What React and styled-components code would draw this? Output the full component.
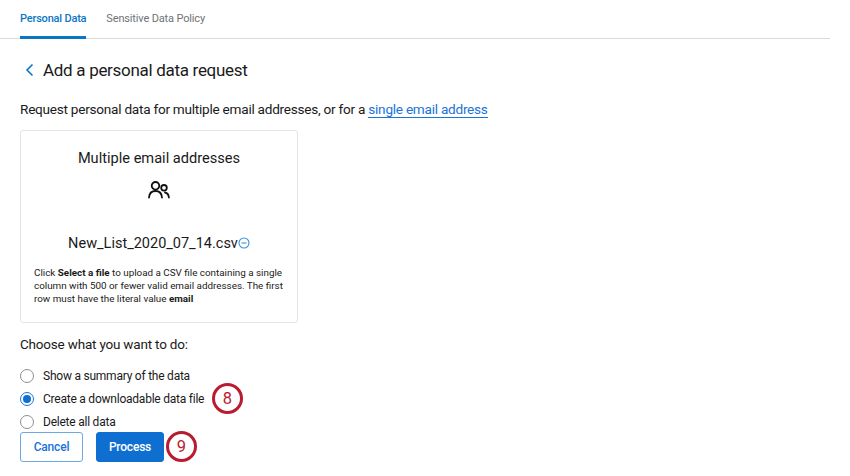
import React from "react";
import styled, { createGlobalStyle } from "styled-components";

const Global = createGlobalStyle`
  html, body { margin: 0; padding: 0; background: #fff; }
  body { font-family: Roboto, "Liberation Sans", sans-serif; color: #1a1a1a; }
`;
const Page = styled.div`
  width: 850px; height: 476px; overflow: hidden; position: relative;
`;
const Tabs = styled.div`
  width: 830px; height: 39px; box-sizing: border-box; padding-left: 20px;
  display: flex; gap: 20px; border-bottom: 1px solid #d9d9dc;
`;
const Tab = styled.div`
  height: 39px; box-sizing: border-box; padding-top: 12px; font-size: 11px; line-height: 14px;
  font-weight: ${p => (p.$active ? 500 : 400)};
  letter-spacing: ${p => (p.$active ? "-0.2px" : "-0.15px")};
  color: ${p => (p.$active ? "#0b76c4" : "#6f7378")};
  border-bottom: ${p => (p.$active ? "3px solid #0b76c4" : "0")};
`;
const Content = styled.div`
  padding: 0 20px; display: flex; flex-direction: column; align-items: flex-start;
`;
const Heading = styled.div`
  margin-top: 20px; height: 22px; display: flex; align-items: center; gap: 8px; padding-left: 5px;
`;
const Title = styled.h1`
  margin: 0; font-size: 17px; line-height: 22px; font-weight: 400; letter-spacing: -0.3px; color: #1a1a1a;
`;
const Lead = styled.p`
  margin: 18px 0 0; font-size: 13.6px; line-height: 20px; letter-spacing: -0.25px;
`;
const Link = styled.a`
  color: #1a73d9; border-bottom: 1px solid #1a73d9; padding-bottom: 0;
`;
const Card = styled.div`
  margin-top: 11px; width: 278px; height: 193px; box-sizing: border-box;
  border: 1px solid #e4e5e7; border-radius: 3px; padding: 17px 13px 0;
  display: flex; flex-direction: column; align-items: center;
`;
const CardTitle = styled.div`
  font-size: 14.6px; line-height: 20px; text-align: center;
`;
const IconWrap = styled.div`
  margin-top: 13px; height: 22px;
`;
const FileRow = styled.div`
  margin-top: 29px; height: 22px; display: flex; align-items: center; font-size: 14.5px;
`;
const Help = styled.p`
  margin: 12px 0 0; align-self: stretch; font-size: 9.85px; line-height: 13px;
  b { font-weight: 700; }
`;
const Prompt = styled.div`
  margin-top: 12px; font-size: 13.5px; line-height: 18px; letter-spacing: -0.2px;
`;
const Options = styled.div`
  margin-top: 16px; display: flex; flex-direction: column; gap: 9px;
`;
const Option = styled.label`
  display: flex; align-items: center; gap: 9px; height: 14px; font-size: 12px; line-height: 14px; letter-spacing: -0.23px;
`;
const Radio = styled.span`
  width: 14px; height: 14px; border-radius: 50%; box-sizing: border-box;
  border: 1px solid ${p => (p.$on ? "#1a73d9" : "#8b8e92")}; background: #fff;
  display: flex; align-items: center; justify-content: center;
  &::after { content: ""; width: 8px; height: 8px; border-radius: 50%; background: ${p => (p.$on ? "#0f6fd1" : "transparent")}; }
`;
const Actions = styled.div`
  margin-top: 3px; display: flex; gap: 13px;
`;
const Button = styled.button`
  width: ${p => (p.$primary ? "68px" : "63px")}; height: 30px; border-radius: 3px; box-sizing: border-box;
  font: 500 12px Roboto, sans-serif; letter-spacing: -0.2px; padding: 0;
  border: 1px solid ${p => (p.$primary ? "#0f6fd1" : "#6aa8e8")};
  background: ${p => (p.$primary ? "#0f6fd1" : "#fff")};
  color: ${p => (p.$primary ? "#fff" : "#1a73d9")};
`;
const Badge = styled.div`
  position: absolute; left: ${p => p.$x}px; top: ${p => p.$y}px;
  width: 31px; height: 31px; box-sizing: border-box; border-radius: 50%;
  border: 3px solid #b91c30; background: #fff; color: #b91c30;
  display: flex; align-items: center; justify-content: center;
  font: 400 16.5px Roboto, sans-serif;
`;

const Back = () => (
  <svg width="10" height="14" viewBox="0 0 10 14" fill="none" stroke="#0b76c4" strokeWidth="1.6">
    <path d="M7.500 1.500 2 7l5.500 5.500" />
  </svg>
);
const Users = () => (
  <svg width="22" height="18" viewBox="0 0 22 18" fill="none" stroke="#111" strokeWidth="1.8" strokeLinecap="round">
    <circle cx="7.500" cy="4.800" r="3.800" />
    <path d="M1 16.500c.3-4.200 3-6.500 6.500-6.500s6.200 2.300 6.500 6.500" />
    <circle cx="16" cy="6.800" r="2.800" />
    <path d="M17 11.500c2.200.4 3.600 2.300 3.900 5" />
  </svg>
);
const Minus = () => (
  <svg width="12" height="12" viewBox="0 0 12 12" fill="none" stroke="#3a8fd8" strokeWidth="1.100">
    <circle cx="6" cy="6" r="5" />
    <path d="M3.500 6h5" />
  </svg>
);

export default function App() {
  return (
    <Page>
      <Global />
      <Tabs>
        <Tab $active>Personal Data</Tab>
        <Tab>Sensitive Data Policy</Tab>
      </Tabs>
      <Content>
        <Heading><Back /><Title>Add a personal data request</Title></Heading>
        <Lead>Request personal data for multiple email addresses, or for a <Link>single email address</Link></Lead>
        <Card>
          <CardTitle>Multiple email addresses</CardTitle>
          <IconWrap><Users /></IconWrap>
          <FileRow>New_List_2020_07_14.csv<Minus /></FileRow>
          <Help>Click <b>Select a file</b> to upload a CSV file containing a single column with 500 or fewer valid email addresses. The first row must have the literal value <b>email</b></Help>
        </Card>
        <Prompt>Choose what you want to do:</Prompt>
        <Options>
          <Option><Radio />Show a summary of the data</Option>
          <Option><Radio $on />Create a downloadable data file</Option>
          <Option><Radio />Delete all data</Option>
        </Options>
        <Actions>
          <Button>Cancel</Button>
          <Button $primary>Process</Button>
        </Actions>
      </Content>
      <Badge $x={212} $y={383}>8</Badge>
      <Badge $x={166} $y={431}>9</Badge>
    </Page>
  );
}
